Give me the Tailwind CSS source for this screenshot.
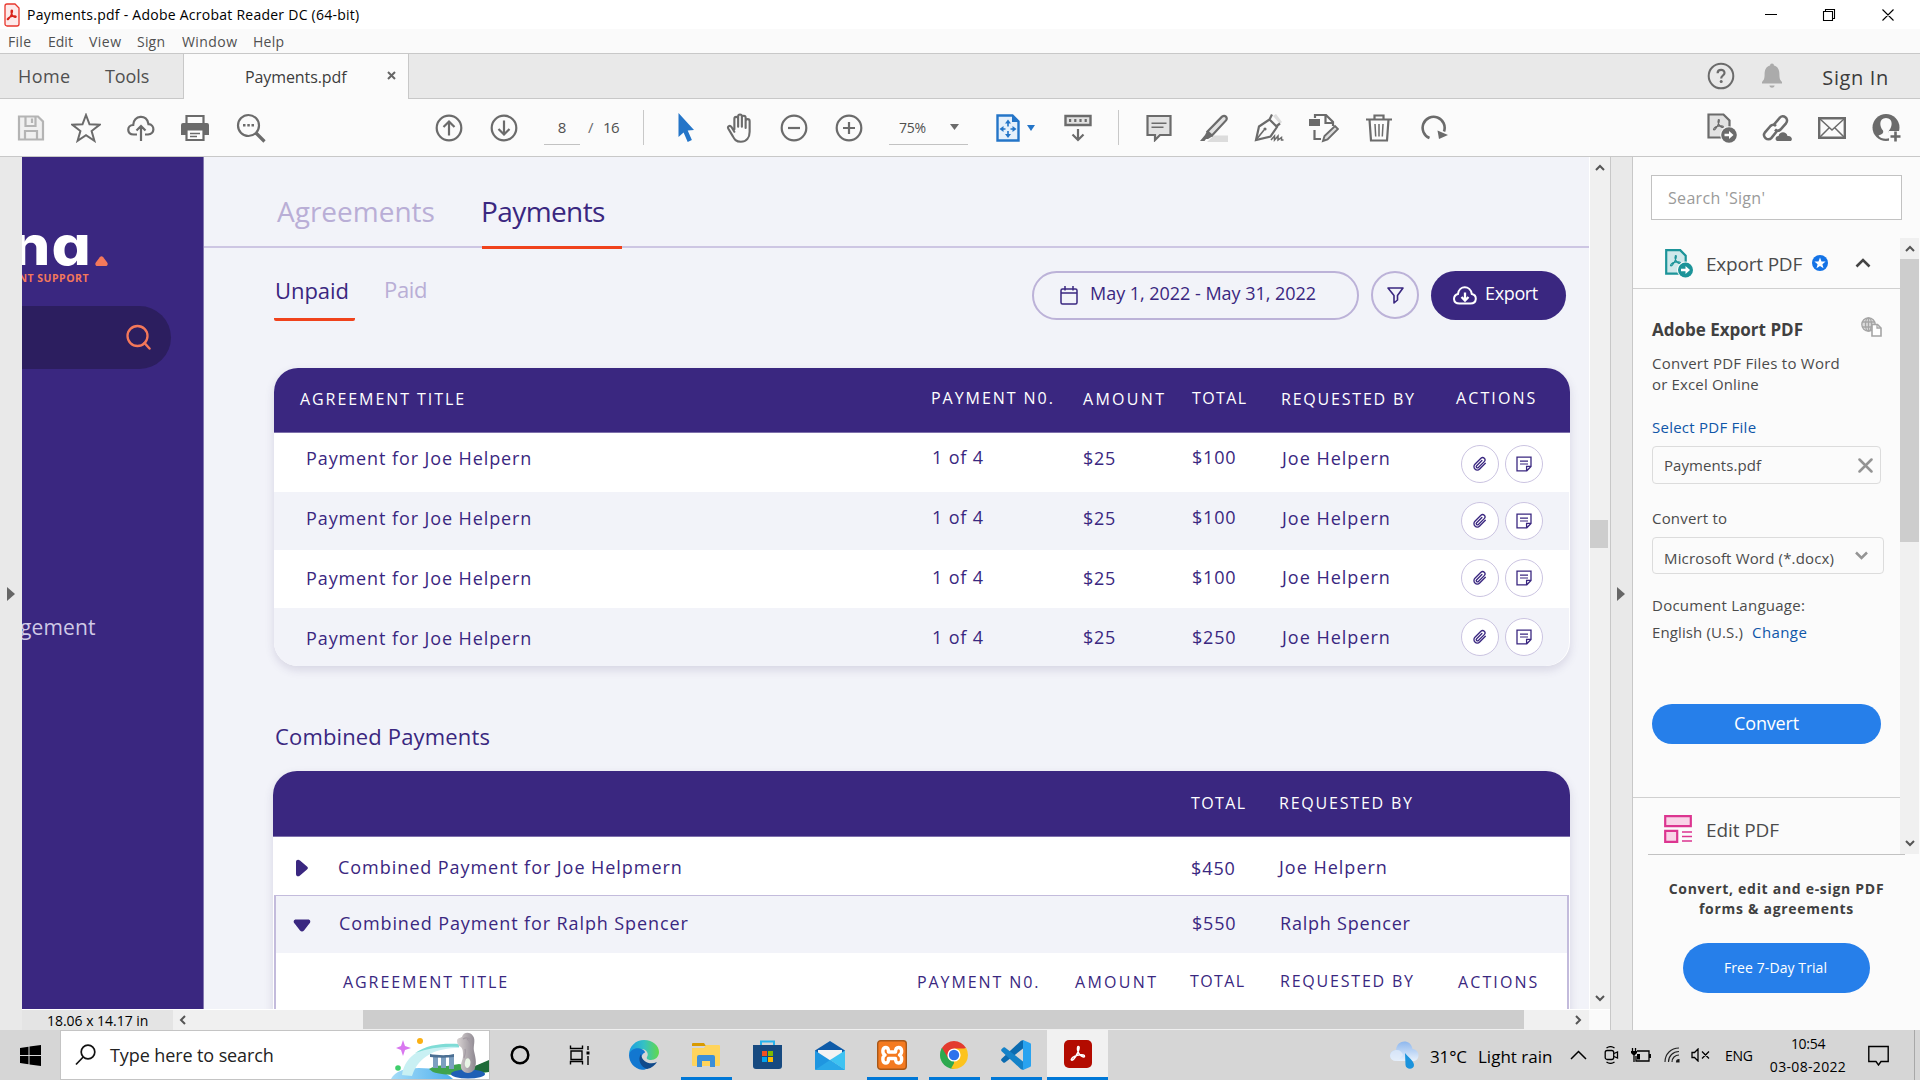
<!DOCTYPE html>
<html lang="en">
<head>
<meta charset="utf-8">
<title>Payments.pdf - Adobe Acrobat Reader DC (64-bit)</title>
<script src="https://cdn.jsdelivr.net/npm/@tailwindcss/browser@4"></script>
</head>
<body class="w-[1920px] h-[1080px] overflow-hidden bg-[#fbfbfb] font-['Open_Sans',sans-serif] text-[#4b4b4b] flex flex-col whitespace-nowrap">

<svg class="hidden">
  <symbol id="clip" viewBox="0 0 24 24"><path d="M20 11 11.500 19.500a5 5 0 0 1-7.100-7.100l9-9a3.500 3.500 0 0 1 5 5l-8.800 8.800a1.800 1.800 0 0 1-2.600-2.600l7.800-7.800" fill="none" stroke="currentColor" stroke-width="2" stroke-linecap="round"/></symbol>
  <symbol id="note" viewBox="0 0 16 16"><path d="M1 1.200h14v9.300l-4.200 4.300H1z M10.600 14.500v-4.200H15" fill="none" stroke="currentColor" stroke-width="1.300"/><path d="M4 5.200h8M4 8h8" stroke="currentColor" stroke-width="1.200"/></symbol>
  <symbol id="acro" viewBox="0 0 24 24"><path d="M4 19.500c1.200-2.800 6.400-5 11-5.300 2.500-.2 5 .3 4.800 1.800-.3 1.500-3.300.5-5.300-1.500-2.400-2.500-3.600-7-3-9.300.3-1.300 1.800-1.200 1.900.2.200 3-3.900 11.300-6.400 13.900C5.600 20.900 3.600 21 4 19.500z" fill="none" stroke="currentColor" stroke-width="1.800" stroke-linejoin="round"/></symbol>
</svg>

<!-- Title bar -->
<header class="h-[29px] shrink-0 bg-white flex items-center pl-1 text-black">
  <svg class="w-[16px] h-[24px] shrink-0" viewBox="0 0 16 24"><path d="M1 3a2 2 0 0 1 2-2h8l4 4v16a2 2 0 0 1-2 2H3a2 2 0 0 1-2-2z" fill="#fdeaea" stroke="#e8362c" stroke-width="1.300"/><path d="M3.500 16c.6-1.600 4-3 7-3 2 0 2 1.300.4 1.200C8.600 14 6.900 10 7.200 8c.2-1.200 1.300-1 1.200.2-.1 2.200-2.600 6.600-4 7.900-.6.6-1.200.4-.9-.1z" fill="none" stroke="#d8241b" stroke-width="1.500"/></svg>
  <span class="ml-[7px] text-[14px] tracking-[0.25px]">Payments.pdf - Adobe Acrobat Reader DC (64-bit)</span>
  <svg class="ml-auto mr-[25px] w-[130px] h-[14px]" viewBox="0 0 130 14" fill="none" stroke="#000" stroke-width="1.100"><path d="M0 6.500h12M58.500 3.500h9v9h-9zM60.500 3.500v-2h9v9h-2M117.500 1.500l11 11M128.500 1.500l-11 11"/></svg>
</header>

<!-- Menu bar -->
<nav class="h-[25px] shrink-0 bg-[#fafafa] border-b border-[#c8c8c8] flex items-center pl-2 text-[14px] text-[#505050]">
  <span class="w-[40px] tracking-[0.28px]">File</span><span class="w-[41px]">Edit</span><span class="w-[48px] tracking-[0.47px]">View</span><span class="w-[45px] tracking-[0.2px]">Sign</span><span class="w-[71px] tracking-[0.42px]">Window</span><span class="tracking-[0.3px]">Help</span>
</nav>

<!-- Tab strip -->
<div class="h-[45px] shrink-0 bg-[#e9e9e9] border-b border-[#c8c8c8] flex">
  <div class="w-[183px] flex items-center pl-[18px] text-[18px] text-[#505050]"><span class="w-[87px] tracking-[0.4px]">Home</span><span class="tracking-[-0.1px]">Tools</span></div>
  <div class="w-[226px] h-[45px] bg-[#fbfbfb] border-x border-[#c8c8c8] flex items-center pl-[61px] text-[16px] text-[#3d3d3d]"><span class="tracking-[-0.1px]">Payments.pdf</span>
    <svg class="ml-[41px] mb-[3px] w-[9px] h-[9px]" viewBox="0 0 9 9"><path d="M1 1l7 7M8 1l-7 7" stroke="#666" stroke-width="2"/></svg></div>
  <div class="ml-auto flex items-center text-[#6b6b6b]">
    <svg class="w-[28px] h-[28px]" viewBox="0 0 28 28"><circle cx="14" cy="14" r="12.300" fill="none" stroke="#6b6b6b" stroke-width="2"/><path d="M10.600 11.200c.1-4.400 7-4.300 6.900-.2-.1 2.600-3.300 2.500-3.300 5.500" fill="none" stroke="#6b6b6b" stroke-width="2.200"/><circle cx="14.200" cy="19.600" r="1.500" fill="#6b6b6b"/></svg>
    <svg class="ml-[26px] w-[22px] h-[26px]" viewBox="0 0 22 26"><path d="M11 .5a2 2 0 0 1 2 2c4 1 5.400 4.500 5.400 8.500 0 5 .8 6 2.600 8v1.500H1V19c1.800-2 2.600-3 2.600-8 0-4 1.400-7.500 5.400-8.500a2 2 0 0 1 2-2zM8.400 22.500h5.200c-.4 3-4.800 3-5.200 0z" fill="#ababab"/></svg>
    <span class="ml-[39px] mr-[31px] pt-[3px] text-[20px] font-medium text-[#3c3c3c] tracking-[0.64px]">Sign In</span>
  </div>
</div>

<!-- Toolbar -->
<div class="h-[58px] shrink-0 bg-[#fbfbfb] border-b border-[#c8c8c8] flex items-center pl-[3px] text-[#6b6b6b] text-[15px]">
  <div class="w-[55px] flex justify-center"><svg class="w-[28px] h-[28px]" viewBox="0 0 28 28" fill="none" stroke="#b4b4b4" stroke-width="2.200"><path d="M2 2.500h19l5 5v18H2z" fill="#f0f0f0"/><path d="M8.500 3v9h10V3M15 4.500v4.500M8 25v-8h12v8"/></svg></div>
  <div class="w-[55px] flex justify-center"><svg class="w-[30px] h-[30px]" viewBox="0 0 30 30"><path d="M15 2l3.500 9.300 10 .5-7.900 6.200 2.800 9.800L15 22.200l-8.400 5.600L9.400 18 1.500 11.800l10-.5z" fill="none" stroke="#6b6b6b" stroke-width="2"/></svg></div>
  <div class="w-[55px] flex justify-center"><svg class="w-[28px] h-[28px]" viewBox="0 0 28 28" fill="none" stroke="#6b6b6b" stroke-width="2.200"><path d="M10 20.500H6.800C-.8 20-.2 11.200 6.200 11 6 1 20.500-.5 21.500 10.200c6.600.4 6.600 10-.5 10.300h-3M14 27V13M9.500 16.500L14 12l4.500 4.500"/></svg></div>
  <div class="w-[55px] flex justify-center"><svg class="-ml-px w-[28px] h-[28px]" viewBox="0 0 28 28"><path d="M5.500 9V2h17v7" fill="none" stroke="#6b6b6b" stroke-width="2.200"/><path d="M2 9h24a2 2 0 0 1 2 2v10h-5v-5H5v5H0V11a2 2 0 0 1 2-2z" fill="#6b6b6b"/><path d="M5.500 15.500h17v10.500h-17z" fill="#fff" stroke="#6b6b6b" stroke-width="2.200"/><path d="M9 19.500h10M9 22.500h7" stroke="#6b6b6b" stroke-width="1.500"/></svg></div>
  <div class="w-[55px] flex justify-center"><svg class="w-[30px] h-[30px]" viewBox="0 0 30 30"><circle cx="12.500" cy="12.500" r="10.500" fill="none" stroke="#6b6b6b" stroke-width="2.200"/><path d="M20 20l8.500 8.500" stroke="#6b6b6b" stroke-width="3.200"/><path d="M7 11h2.500v2.500H7zM11.300 11h2.500v2.500h-2.500zM15.500 11H18v2.500h-2.500z" fill="#6b6b6b"/></svg></div>
  <div class="ml-[143px] w-[55px] flex justify-center"><svg class="w-[28px] h-[28px]" viewBox="0 0 28 28" fill="none" stroke="#6b6b6b" stroke-width="2.200"><circle cx="14" cy="14" r="12.300"/><path d="M14 21.500V8M8.500 13L14 7.500l5.500 5.500"/></svg></div>
  <div class="w-[55px] flex justify-center"><svg class="w-[28px] h-[28px]" viewBox="0 0 28 28" fill="none" stroke="#6b6b6b" stroke-width="2.200"><circle cx="14" cy="14" r="12.300"/><path d="M14 6.500V20M8.500 15l5.500 5.500 5.500-5.500"/></svg></div>
  <div class="ml-[13px] w-[36px] h-[35px] border-b border-[#c2c2c2] flex items-center justify-center text-[#505050]">8</div>
  <span class="ml-[8px] w-[15px]">/</span><span class="w-[40px] text-[#505050] tracking-[-0.5px]">16</span>
  <div class="w-[5px] h-[35px] border-l border-[#c8c8c8]"></div>
  <div class="ml-[10px] w-[55px] flex justify-center"><svg class="w-[18px] h-[30px]" viewBox="0 0 18 30"><path d="M1.500 0l15.500 17-6.300.6 4.200 9.400-4.200 1.900-4.100-9.500L1.500 24z" fill="#2475c8"/></svg></div>
  <div class="w-[53px] flex justify-center"><svg class="w-[30px] h-[30px]" viewBox="0 0 24 24" fill="none" stroke="#6b6b6b" stroke-width="1.700" stroke-linecap="round" stroke-linejoin="round"><path d="M7.500 13V4.600a1.500 1.500 0 0 1 3 0V11M10.500 11V2.700a1.500 1.500 0 0 1 3 0V11M13.500 11V3.700a1.500 1.500 0 0 1 3 0V12M16.500 12V6.500a1.500 1.500 0 0 1 3.200 0V15c0 5-2.700 8-7 8-4 0-5.200-2-6.500-4.500L2.700 12.600c-1-2 1.200-3.200 2.500-1.400L7.500 15"/></svg></div>
  <div class="w-[55px] flex justify-center"><svg class="w-[28px] h-[28px]" viewBox="0 0 28 28" fill="none" stroke="#6b6b6b" stroke-width="2.200"><circle cx="14" cy="14" r="12.300"/><path d="M8 14h12"/></svg></div>
  <div class="w-[55px] flex justify-center"><svg class="w-[28px] h-[28px]" viewBox="0 0 28 28" fill="none" stroke="#6b6b6b" stroke-width="2.200"><circle cx="14" cy="14" r="12.300"/><path d="M8 14h12M14 8v12"/></svg></div>
  <div class="ml-[13px] w-[79px] h-[35px] border-b border-[#c2c2c2] flex items-center pl-[10px] text-[14px] text-[#505050]"><span class="tracking-[-0.29px]">75%</span><svg class="ml-[24px] w-[9px] h-[6px]" viewBox="0 0 9 6"><path d="M0 0h9L4.500 6z" fill="#6b6b6b"/></svg></div>
  <div class="ml-[28px] flex items-center gap-[7px]"><svg class="w-[24px] h-[28px]" viewBox="0 0 24 28"><path d="M1.500 1.500h15l6 6v19h-21z" fill="#e5f0fb" stroke="#2475c8" stroke-width="2.400"/><path d="M16 1v7h7z" fill="#2475c8"/><path d="M12 5.500l3 4H9zM12 24l3-4H9zM3.500 15l4-3v6zM20.500 15l-4-3v6z" fill="#2475c8"/><path d="M12 8v4.500M12 17v4M5.500 15h4M14.500 15h4" stroke="#2475c8" stroke-width="1.600"/></svg>
  <svg class="w-[8px] h-[6px]" viewBox="0 0 8 6"><path d="M0 0h8L4 6z" fill="#2475c8"/></svg></div>
  <div class="ml-[15px] w-[55px] flex justify-center"><svg class="w-[28px] h-[28px]" viewBox="0 0 28 28" fill="none" stroke="#6b6b6b"><path d="M1.500 2h25v9h-25z" fill="#e2e2e2" stroke-width="2.400"/><path d="M5 6.500h18" stroke-width="3" stroke-dasharray="2.200 3"/><path d="M14 15v11M8.500 20.500L14 26l5.500-5.500" stroke-width="2.200"/></svg></div>
  <div class="ml-[13px] w-px h-[35px] bg-[#c8c8c8]"></div>
  <div class="ml-[12px] w-[55px] flex justify-center"><svg class="w-[26px] h-[28px]" viewBox="0 0 26 28"><path d="M1.500 2h23v19H14l-5 5v-5H1.500z" fill="#e2e2e2" stroke="#6b6b6b" stroke-width="2.200"/><path d="M5.500 9.300h15M5.500 13.300h12" stroke="#6b6b6b" stroke-width="1.500"/></svg></div>
  <div class="w-[55px] flex justify-center"><svg class="w-[28px] h-[28px]" viewBox="0 0 28 28"><path d="M14 21.500h14V28H7z" fill="#dcdcdc"/><path d="M7.500 17.500L22 2.700c3-2.300 6 .8 4 3.700L12 21.500z" fill="#e2e2e2" stroke="#6b6b6b" stroke-width="2.200"/><path d="M7 17l6 5-5 3H6l-1.500 2H0l5-6z" fill="#6b6b6b"/></svg></div>
  <div class="w-[55px] flex justify-center"><svg class="w-[30px] h-[30px]" viewBox="0 0 30 30" fill="none" stroke="#6b6b6b" stroke-width="2.200"><path d="M19 3l7 8 2-2-6-8z" fill="#ddd" stroke="none"/><path d="M18 1.500l-2.500 5M26 10.500l-4 3M2 27l3-13.500 10.500-7L23 14l-6.500 9.500z"/><path d="M2 27l8-10" stroke-width="1.600"/><circle cx="11" cy="16" r="1.600" fill="#6b6b6b" stroke="none"/><path d="M17 27l3.500-4v4l3.500-4v4l3.500-2.500V27h2" stroke-width="1.500"/></svg></div>
  <div class="w-[55px] flex justify-center"><svg class="w-[30px] h-[30px]" viewBox="0 0 30 30" fill="none" stroke="#6b6b6b" stroke-width="2.200"><path d="M6 5V2h11l7 7v4M16.500 2v8H24M5.500 17v9H12"/><path d="M0 6h11v7H0z" fill="#6b6b6b" stroke="none"/><path d="M14 28l1.500-5L26 13l3 3-10.500 10.500z" fill="#ddd" stroke-width="1.900"/></svg></div>
  <div class="w-[55px] flex justify-center"><svg class="w-[26px] h-[28px]" viewBox="0 0 26 28" fill="none" stroke="#6b6b6b" stroke-width="2.200"><path d="M0 5.500h26M8.500 5V1.500h9V5M3.500 5.500l1.500 21h16l1.500-21"/><path d="M9 10l.7 12.500M13 10v12.500M17 10l-.7 12.500" stroke-width="1.500"/></svg></div>
  <div class="w-[55px] flex justify-center"><svg class="w-[28px] h-[26px]" viewBox="0 0 28 26"><path d="M9.500 23A11 11 0 1 1 24 16.500" fill="none" stroke="#6b6b6b" stroke-width="2.600"/><path d="M17.500 15.500L28 20l-9 4z" fill="#6b6b6b"/></svg></div>
  <div class="ml-auto w-[55px] flex justify-center"><svg class="w-[30px] h-[30px]" viewBox="0 0 30 30"><path d="M1.500 1.500h15l6 6v17h-21z" fill="#e2e2e2" stroke="#6b6b6b" stroke-width="2.200"/><use href="#acro" x="4" y="4" width="15" height="15"/><circle cx="22" cy="22" r="8.800" fill="#fbfbfb"/><circle cx="22" cy="22" r="7.800" fill="#6b6b6b"/><path d="M17.500 20.700H22V18l4.500 4-4.500 4v-2.700h-4.500z" fill="#fff"/></svg></div>
  <div class="w-[55px] flex justify-center"><svg class="w-[30px] h-[28px]" viewBox="0 0 30 28" fill="none" stroke="#6b6b6b" stroke-width="2.600"><path d="M12 10.500l5.500-6.500c3.500-4.500 10 .8 6.500 5.300l-5.500 6.200c-1.500 1.600-4 1.600-5.500 0"/><path d="M15 17l-5.500 6.800c-3.500 4-10-1-6.500-5.500L8.500 12c1.500-1.600 4-1.600 5.500 0"/><path d="M15 27c-2.500-1.500-1.500-5 1.500-5 1-5 8-5 9 0 4-.5 5.500 3 3.500 5z" fill="#6b6b6b" stroke="none"/></svg></div>
  <div class="w-[55px] flex justify-center"><svg class="w-[28px] h-[22px]" viewBox="0 0 28 22" fill="none" stroke="#6b6b6b"><path d="M1.200 1.200h25.600v19.600H1.200z" stroke-width="2.400"/><path d="M2 2l12 11L26 2M2 20l9-9M26 20l-9-9" stroke-width="1.500"/></svg></div>
  <div class="w-[55px] flex justify-center mr-[6px]"><svg class="w-[30px] h-[28px]" viewBox="0 0 30 28"><circle cx="14" cy="13.500" r="13.500" fill="#6b6b6b"/><path d="M14 4c7.500 0 6.500 9 3 12.500-.8 2.500.5 3.500 4 4.500-2 5-12 5-14.500.5 4-1.500 5.300-2.500 4.500-5C7.500 13 6.500 4 14 4z" fill="#fbfbfb"/><path d="M17 17h13v11H17z" fill="#fbfbfb"/><path d="M18.500 22.500h10M23.500 17.500v10" stroke="#6b6b6b" stroke-width="2.600"/></svg></div>
</div>

<!-- Workspace -->
<main class="h-[873px] shrink-0 flex bg-[#e9e9e9]">
  <div class="w-[22px] flex items-center justify-center"><svg class="ml-[-1px] w-[8px] h-[14px]" viewBox="0 0 8 14"><path d="M0 0l8 7-8 7z" fill="#666"/></svg></div>

  <div class="w-[1588px] flex flex-col">
    <div class="h-[852px] flex">
      <!-- Document page -->
      <div class="w-[1567px] flex bg-[#f2f3f9] text-[#3a2780] overflow-hidden">
        <aside class="w-[182px] h-full shrink-0 bg-[#3a2780] border-r border-[#8378b0] overflow-hidden flex flex-col">
          <div class="h-[112px] shrink-0 pt-[58px] pr-[95px] flex items-start justify-end">
            <div class="h-[54px] flex items-end"><span class="h-[54px] origin-right scale-x-[1.120] font-['Inter',sans-serif] font-extrabold text-[55px] leading-[60px] tracking-[1px] text-white [font-feature-settings:'cv11']">na</span><svg class="ml-[3px] mb-[3px] w-[13px] h-[10px]" viewBox="0 0 13 10"><path d="M4.800 1.200a2.200 2.200 0 0 1 3.400 0l4 5.200c1.100 1.600.3 3.600-1.600 3.600H2.400C.5 10-.3 8 .8 6.400z" fill="#f4785a"/></svg></div>
          </div>
          <div class="mt-[2px] h-[14px] mr-[114px] flex justify-end items-center text-[10.500px] leading-[14px] font-bold tracking-[0.5px] text-[#f4785a]">NT SUPPORT</div>
          <div class="mt-[21px] h-[63px] w-[149px] shrink-0 rounded-r-[32px] bg-[#2c1e5f] flex items-center justify-end pr-[20px]"><svg class="-mt-px w-[25px] h-[26px]" viewBox="0 0 25 26"><circle cx="11.500" cy="12" r="10" fill="none" stroke="#f4785a" stroke-width="2.300"/><path d="M18.500 19l5 5.500" stroke="#f4785a" stroke-width="2.500" stroke-linecap="round"/></svg></div>
          <div class="mt-[242px] h-[32px] leading-[32px] -ml-[2px] text-[21px] tracking-[0.15px] text-[#cfc9e6]">gement</div>
        </aside>
        <section class="grow flex flex-col">
          <div class="h-[91px] shrink-0 border-b-2 border-[#cdc6e3] pl-[73px] flex items-end text-[28px]">
            <span class="w-[205px] h-[57px] leading-[44px] tracking-[0px] text-[#b9aed6]">Agreements</span>
            <span class="w-[140px] h-[60px] leading-[44px] tracking-[-0.6px] -mb-[3px] -indent-px border-b-3 border-[#f0421c]">Payments</span>
          </div>
          <div class="h-[120px] shrink-0 pl-[70px] pr-[23px] pt-[23px] flex items-start">
            <span class="w-[81px] h-[50px] leading-[38px] border-b-3 border-[#f0421c] rounded-[2px] text-[22px] tracking-[-0.05px] pl-px">Unpaid</span>
            <span class="ml-[29px] leading-[37px] text-[22px] tracking-[-0.3px] text-[#b9aed6]">Paid</span>
            <div class="ml-auto w-[327px] h-[49px] rounded-full border-2 border-[#bcb2d8] flex items-center pl-[26px]">
              <svg class="w-[18px] h-[19px]" viewBox="0 0 18 19" fill="none" stroke="#3a2780" stroke-width="1.500"><rect x="1" y="3" width="16" height="15" rx="1.500"/><path d="M1 7h16M5 0v4.500M13 0v4.500"/></svg>
              <span class="ml-[12px] pb-[4px] text-[18px] tracking-[-0.03px]">May 1, 2022 - May 31, 2022</span>
            </div>
            <div class="ml-[12px] w-[48px] h-[48px] rounded-full border-2 border-[#bcb2d8] flex items-center justify-center"><svg class="w-[17px] h-[17px]" viewBox="0 0 17 17"><path d="M1 1h15l-5.500 7.500v4.500L7 16V8.500z" fill="none" stroke="#3a2780" stroke-width="1.600" stroke-linejoin="round"/></svg></div>
            <div class="ml-[12px] w-[135px] h-[49px] rounded-full bg-[#3a2780] flex items-center pl-[22px] text-white">
              <svg class="w-[24px] h-[19px]" viewBox="0 0 24 19" fill="none" stroke="#fff" stroke-width="2"><path d="M6.500 17.500C-.5 17.500-.5 9.500 5 8 6-1 17.500-1 18.800 8c5.500 1 5.500 9.500-1.300 9.500z"/><path d="M12 6.500v7M8.500 11l3.500 3.500 3.500-3.500" stroke-width="2.300"/></svg>
              <span class="ml-[8px] pb-[4px] text-[18px] tracking-[-0.35px]">Export</span>
            </div>
          </div>

          <!-- Unpaid table -->
          <div class="ml-[70px] w-[1296px] h-[298px] shrink-0 rounded-[24px] overflow-hidden bg-white shadow-[0_4px_10px_rgba(60,50,110,0.15)] text-[18px] leading-[24px]">
            <div class="h-[65px] bg-[#3a2780] border-b border-[#7d70ab] text-white text-[16px] grid grid-cols-[657px_152px_109px_89px_174px_1fr] pt-[19px]">
              <span class="pl-[26px] tracking-[1.93px]">AGREEMENT TITLE</span><span class="-mt-px tracking-[1.95px]">PAYMENT N0.</span><span class="tracking-[2.3px]">AMOUNT</span><span class="-mt-px tracking-[1.4px]">TOTAL</span><span class="tracking-[1.79px]">REQUESTED BY</span><span class="-mt-px pl-px tracking-[2.1px]">ACTIONS</span>
            </div>
            <div class="h-[59px] grid grid-cols-[657px_152px_109px_89px_180px_1fr] pt-[13px]">
              <span class="pl-[32px] tracking-[0.9px]">Payment for Joe Helpern</span><span class="-mt-px pl-px tracking-[0.84px]">1 of 4</span><span class="tracking-[0.7px]">$25</span><span class="-mt-px tracking-[0.8px]">$100</span><span class="pl-px tracking-[1px]">Joe Helpern</span>
              <span class="-mt-px flex gap-[6px]"><i class="w-[38px] h-[38px] rounded-full bg-white border-[1.500px] border-[#cbc4e1] flex items-center justify-center"><svg class="w-[16px] h-[16px]"><use href="#clip"/></svg></i><i class="w-[38px] h-[38px] rounded-full bg-white border-[1.500px] border-[#cbc4e1] flex items-center justify-center"><svg class="w-[16px] h-[16px]"><use href="#note"/></svg></i></span>
            </div>
            <div class="h-[58px] mr-px bg-[#f2f3f9] grid grid-cols-[657px_152px_109px_89px_180px_1fr] pt-[14px]">
              <span class="pl-[32px] tracking-[0.9px]">Payment for Joe Helpern</span><span class="-mt-px pl-px tracking-[0.84px]">1 of 4</span><span class="tracking-[0.7px]">$25</span><span class="-mt-px tracking-[0.8px]">$100</span><span class="pl-px tracking-[1px]">Joe Helpern</span>
              <span class="-mt-[4px] flex gap-[6px]"><i class="w-[38px] h-[38px] rounded-full bg-white border-[1.500px] border-[#cbc4e1] flex items-center justify-center"><svg class="w-[16px] h-[16px]"><use href="#clip"/></svg></i><i class="w-[38px] h-[38px] rounded-full bg-white border-[1.500px] border-[#cbc4e1] flex items-center justify-center"><svg class="w-[16px] h-[16px]"><use href="#note"/></svg></i></span>
            </div>
            <div class="h-[58px] grid grid-cols-[657px_152px_109px_89px_180px_1fr] pt-[16px]">
              <span class="pl-[32px] tracking-[0.9px]">Payment for Joe Helpern</span><span class="-mt-px pl-px tracking-[0.84px]">1 of 4</span><span class="tracking-[0.7px]">$25</span><span class="-mt-px tracking-[0.8px]">$100</span><span class="-mt-px pl-px tracking-[1px]">Joe Helpern</span>
              <span class="-mt-[7px] flex gap-[6px]"><i class="w-[38px] h-[38px] rounded-full bg-white border-[1.500px] border-[#cbc4e1] flex items-center justify-center"><svg class="w-[16px] h-[16px]"><use href="#clip"/></svg></i><i class="w-[38px] h-[38px] rounded-full bg-white border-[1.500px] border-[#cbc4e1] flex items-center justify-center"><svg class="w-[16px] h-[16px]"><use href="#note"/></svg></i></span>
            </div>
            <div class="h-[58px] mr-px rounded-br-[24px] bg-[#f2f3f9] grid grid-cols-[657px_152px_109px_89px_180px_1fr] pt-[18px]">
              <span class="pl-[32px] tracking-[0.9px]">Payment for Joe Helpern</span><span class="-mt-px pl-px tracking-[0.84px]">1 of 4</span><span class="-mt-px tracking-[0.7px]">$25</span><span class="-mt-px tracking-[0.8px]">$250</span><span class="-mt-px pl-px tracking-[1px]">Joe Helpern</span>
              <span class="-mt-[8px] flex gap-[6px]"><i class="w-[38px] h-[38px] rounded-full bg-white border-[1.500px] border-[#cbc4e1] flex items-center justify-center"><svg class="w-[16px] h-[16px]"><use href="#clip"/></svg></i><i class="w-[38px] h-[38px] rounded-full bg-white border-[1.500px] border-[#cbc4e1] flex items-center justify-center"><svg class="w-[16px] h-[16px]"><use href="#note"/></svg></i></span>
            </div>
          </div>

          <h2 class="h-[105px] shrink-0 pt-[54px] pl-[71px] text-[22px] leading-[32px] tracking-[0.15px]">Combined Payments</h2>

          <!-- Combined payments table -->
          <div class="ml-[69px] w-[1297px] h-[260px] shrink-0 rounded-t-[24px] overflow-hidden bg-white shadow-[0_4px_10px_rgba(60,50,110,0.15)] text-[18px] leading-[24px]">
            <div class="h-[66px] bg-[#3a2780] border-b border-[#7d70ab] text-white text-[16px] grid grid-cols-[918px_88px_1fr] pt-[20px]">
              <span></span><span class="tracking-[1.4px]">TOTAL</span><span class="tracking-[1.79px]">REQUESTED BY</span>
            </div>
            <div class="h-[58px] grid grid-cols-[65px_853px_88px_1fr] pt-[18px]">
              <span class="pl-[22px] pt-[4px]"><svg class="w-[14px] h-[18px]" viewBox="0 0 14 18"><path d="M1 3c0-2.500 2.500-3 4-1.400l7 5.900c1.200 1 1.200 2 0 3l-7 5.900C3.500 18 1 17.500 1 15z" fill="#3a2780"/></svg></span><span class="tracking-[0.95px]">Combined Payment for Joe Helpmern</span><span class="pt-px tracking-[0.9px]">$450</span><span class="tracking-[1px]">Joe Helpern</span>
            </div>
            <div class="ml-[1px] mr-px h-[136px] border-2 border-t border-b-0 border-[#c3bbdc]">
              <div class="h-[57px] bg-[#f2f3f9] grid grid-cols-[63px_852px_88px_1fr] pt-[15px]">
                <span class="pl-[17px] pt-[8px]"><svg class="w-[18px] h-[13px]" viewBox="0 0 18 13"><path d="M3 .5h12c2.500 0 3 2.500 1.400 4L11 11.500c-1.200 1.300-2.800 1.300-4 0L1.600 4.500C0 3 .5.500 3 .5z" fill="#3a2780"/></svg></span><span class="tracking-[0.89px]">Combined Payment for Ralph Spencer</span><span class="pl-px tracking-[0.8px]">$550</span><span class="pl-px tracking-[0.79px]">Ralph Spencer</span>
              </div>
              <div class="grid grid-cols-[641px_158px_115px_90px_178px_1fr] pt-[17px] text-[16px]">
                <span class="pl-[67px] tracking-[1.93px]">AGREEMENT TITLE</span><span class="tracking-[1.9px]">PAYMENT N0.</span><span class="tracking-[2.3px]">AMOUNT</span><span class="-mt-px tracking-[1.4px]">TOTAL</span><span class="-mt-px tracking-[1.79px]">REQUESTED BY</span><span class="tracking-[2.1px]">ACTIONS</span>
              </div>
            </div>
          </div>
        </section>
      </div>
      <!-- Vertical scrollbar -->
      <div class="w-[21px] bg-[#f0f0f0] border-l border-white flex flex-col items-center">
        <svg class="mt-[7px] w-[10px] h-[7px]" viewBox="0 0 10 7"><path d="M1 6l4-4 4 4" fill="none" stroke="#555" stroke-width="2"/></svg>
        <div class="mt-[349px] w-[18px] h-[28px] bg-[#cdcdcd] self-stretch"></div>
        <svg class="mt-auto mb-[7px] w-[10px] h-[7px]" viewBox="0 0 10 7"><path d="M1 1l4 4 4-4" fill="none" stroke="#555" stroke-width="2"/></svg>
      </div>
    </div>
    <!-- Page size and horizontal scrollbar -->
    <div class="h-[21px] flex bg-[#f0f0f0] border-t border-white">
      <div class="w-[151px] bg-[#e4e4e4] flex items-center pl-[25px] text-[14px] text-black tracking-[-0.03px]">18.06 x 14.17 in</div>
      <div class="w-[190px] flex items-center pl-[6px]"><svg class="w-[7px] h-[10px]" viewBox="0 0 7 10"><path d="M6 1L2 5l4 4" fill="none" stroke="#555" stroke-width="2"/></svg></div>
      <div class="w-[1161px] h-[19px] bg-[#cdcdcd]"></div>
      <div class="w-[65px] flex items-center justify-end pr-[7px]"><svg class="w-[7px] h-[10px]" viewBox="0 0 7 10"><path d="M1 1l4 4-4 4" fill="none" stroke="#555" stroke-width="2"/></svg></div>
      <div class="grow bg-[#fafafa]"></div>
    </div>
  </div>

  <div class="w-[23px] border-x border-[#c8c8c8] flex items-center justify-center"><svg class="-ml-[2px] w-[8px] h-[14px]" viewBox="0 0 8 14"><path d="M0 0l8 7-8 7z" fill="#666"/></svg></div>

  <!-- Tools pane -->
  <div class="w-[287px] bg-[#fbfbfb] flex flex-col text-[15px]">
    <div class="mt-[18px] ml-[18px] w-[251px] h-[45px] shrink-0 bg-white border border-[#c2c2c2] flex items-center pl-[16px] text-[16px] text-[#9a9a9a] tracking-[0.32px]">Search 'Sign'</div>
    <div class="mt-[18px] h-[616px] shrink-0 flex">
      <div class="w-[267px] flex flex-col">
        <div class="h-[51px] shrink-0 border-b border-[#d0d0d0] flex items-center pl-[32px]">
          <svg class="w-[28px] h-[29px]" viewBox="0 0 28 29"><path d="M1.200 1.200h14l5.500 5.500v18H1.200z" fill="#cfe8ea" stroke="#1c9499" stroke-width="2.200"/><g color="#1c9499"><use href="#acro" x="3" y="4" width="15" height="15"/></g><circle cx="20.500" cy="21" r="8.500" fill="#fbfbfb"/><circle cx="20.500" cy="21" r="7.500" fill="#1c9499"/><path d="M16 19.700h4.500V17l4.500 4-4.500 4v-2.700H16z" fill="#fff"/></svg>
          <span class="ml-[13px] pt-[2px] text-[19px] tracking-[-0.2px]">Export PDF</span>
          <svg class="ml-[10px] w-[16px] h-[16px]" viewBox="0 0 16 16"><circle cx="8" cy="8" r="8" fill="#1473e6"/><path d="M8 2.500l1.500 3.900 4.100.2-3.200 2.600 1.100 4L8 10.900l-3.500 2.300 1.100-4-3.200-2.600 4.100-.2z" fill="#fff"/></svg>
          <svg class="ml-[27px] w-[16px] h-[10px]" viewBox="0 0 16 10"><path d="M1.500 8.500L8 2l6.500 6.500" fill="none" stroke="#444" stroke-width="2.600"/></svg>
        </div>
        <div class="pl-[19px] flex flex-col leading-[21px]">
          <div class="mt-[26px] h-[28px] flex items-center text-[17px] font-bold text-[#404040]"><span class="pt-px">Adobe Export PDF</span>
            <svg class="ml-auto mr-[18px] mb-[5px] w-[21px] h-[20px]" viewBox="0 0 21 20" fill="none" stroke="#a5a5a5" stroke-width="1.300"><circle cx="7.500" cy="7.500" r="6.700" fill="#dcdcdc"/><ellipse cx="7.500" cy="7.500" rx="3" ry="6.700"/><path d="M1 5h13M1 10h13M7.500 1v13"/><path d="M11 7.500h5.500l3.500 3.500v8h-9z" fill="#fff" stroke-width="1.600"/><path d="M16 7.500V11h4"/></svg></div>
          <p class="mt-[10px] tracking-[0.25px]">Convert PDF Files to Word</p>
          <p class="tracking-[0.15px]">or Excel Online</p>
          <a class="mt-[22px] text-[#0f56a8] tracking-[0.25px]">Select PDF File</a>
          <div class="mt-[8px] w-[229px] h-[38px] rounded-[4px] border border-[#dcdcdc] flex items-center pl-[11px] pr-[7px] pt-px"><span class="tracking-[0.07px]">Payments.pdf</span><svg class="ml-auto w-[15px] h-[15px]" viewBox="0 0 15 15"><path d="M1.500 1.500l12 12M13.500 1.500l-12 12" stroke="#949494" stroke-width="2.500" stroke-linecap="round"/></svg></div>
          <p class="mt-[24px] tracking-[0.19px]">Convert to</p>
          <div class="mt-[8px] w-[232px] h-[37px] rounded-[4px] border border-[#dcdcdc] flex items-center pl-[11px] pr-[15px]"><span class="pt-[5px] tracking-[0.16px]">Microsoft Word (*.docx)</span><svg class="ml-auto w-[13px] h-[9px]" viewBox="0 0 13 9"><path d="M1 1.500L6.500 7 12 1.500" fill="none" stroke="#949494" stroke-width="2.500"/></svg></div>
          <p class="mt-[21px] tracking-[0.25px]">Document Language:</p>
          <p class="mt-[6px] flex gap-[9px]"><span class="tracking-[0.12px]">English (U.S.)</span><a class="text-[#0f56a8] tracking-[0.4px]">Change</a></p>
          <div class="mt-[61px] w-[229px] h-[40px] rounded-full bg-[#267fea] flex items-center justify-center pb-[2px] text-[18px] text-white tracking-[-0.18px]">Convert</div>
        </div>
        <div class="mt-[53px] border-t border-[#d0d0d0] pt-[17px] pl-[31px] flex items-start">
          <svg class="w-[28px] h-[28px]" viewBox="0 0 28 28" fill="#f9d3e7" stroke="#dc3590" stroke-width="2.200"><path d="M1.200 1.200h25.600v10H1.200zM1.200 15.800h12v11h-12z"/><path d="M18 17h10M18 21.500h10M18 26h10" stroke-width="1.600"/></svg>
          <span class="ml-[14px] text-[19px] leading-[31px] tracking-[-0.1px]">Edit PDF</span>
        </div>
      </div>
      <div class="w-[19px] bg-[#f0f0f0] flex flex-col items-center"><svg class="mt-[7px] w-[10px] h-[7px]" viewBox="0 0 10 7"><path d="M1 6l4-4 4 4" fill="none" stroke="#555" stroke-width="2"/></svg><div class="mt-[7px] w-[19px] h-[283px] bg-[#cdcdcd]"></div><svg class="mt-auto mb-[7px] w-[10px] h-[7px]" viewBox="0 0 10 7"><path d="M1 1l4 4 4-4" fill="none" stroke="#555" stroke-width="2"/></svg></div>
    </div>
    <div class="ml-[15px] w-[257px] border-t border-[#c2c2c2] pt-[24px] flex flex-col items-center text-[14px]">
      <p class="text-center font-bold leading-[20px] text-[#404040] tracking-[0.7px]">Convert, edit and e-sign PDF<br>forms &amp; agreements</p>
      <div class="mt-[24px] w-[187px] h-[50px] rounded-full bg-[#267fea] text-white flex items-center justify-center pr-[2px] pb-[2px] tracking-[0.09px]">Free 7-Day Trial</div>
    </div>
  </div>
</main>

<!-- Taskbar -->
<footer class="h-[50px] shrink-0 bg-[#d6d6d6] flex items-center text-black">
  <div class="w-[60px] flex justify-center"><svg class="w-[21px] h-[21px]" viewBox="0 0 21 21"><path d="M0 3l8.500-1.200V10H0zM9.500 1.600L21 0v10H9.500zM0 11h8.500v8.200L0 18zM9.500 11H21v10L9.500 19.400z"/></svg></div>
  <div class="w-[430px] h-[50px] bg-white border border-[#c4c4c4] flex items-center pl-[14px]">
    <svg class="w-[21px] h-[22px]" viewBox="0 0 21 22" fill="none" stroke="#111" stroke-width="1.700"><circle cx="13" cy="8" r="6.800"/><path d="M8.200 13L1 20.500"/></svg>
    <span class="ml-[14px] text-[18px] text-[#222] tracking-[-0.1px]">Type here to search</span>
    <svg class="ml-auto w-[98px] h-[48px]" viewBox="0 0 98 48">
      <defs><linearGradient id="water" x1="0" x2="1"><stop offset="0" stop-color="#a5dcf8"/><stop offset="1" stop-color="#4fb0ee"/></linearGradient><linearGradient id="stone" x1="0" x2="1"><stop offset="0" stop-color="#d9d3d3"/><stop offset="1" stop-color="#8d8790"/></linearGradient></defs>
      <path d="M0 48c4-8 14-11 28-11s26 3 34 11z" fill="url(#water)"/>
      <path d="M11 44C14 22 36 12 68 14v3C46 17 28 24 21 45z" fill="#c9f0f3"/><path d="M24 22C36 14 50 12 68 13v3C52 15 38 17 24 22z" fill="#7fdcd6"/>
      <path d="M38 38c6-4 12-4 18-3l12-2 14 3 16-6v11c-20 4-45 4-56 0z" fill="#3fa34d"/><path d="M84 35l14-6v12H84z" fill="#1f6b39"/>
      <path d="M42 25h5v12h-5zM50 26h5v11h-5zM58 25h5v13h-5z" fill="#7d9fc0"/><path d="M39 23c6 1 16 2 24 0v3c-8 1-16 1-24 0z" fill="#4b6f93"/>
      <ellipse cx="77" cy="43" rx="17" ry="4.500" fill="#1f5fb5"/>
      <path d="M66 10c0-3 3-3 5-4 1-5 8-6 11-1 3 4 0 10 1 15 2 8 3 14 0 19-3 4-9 4-12 0-3-5 1-9 1-14 0-4 0-7-2-9-3-1-4-4-4-6z" fill="url(#stone)"/><path d="M75 28c4-3 6 4 3 8-3 3-6-2-3-8z" fill="#e9f5e6"/><path d="M76 8c3 2 5 6 4 12M72 8c3-2 6-1 8 1M74 18c1 3 0 6-1 9" fill="none" stroke="#a39ba3" stroke-width="1.200"/>
      <path d="M12 9l2 6 6 2-6 2-2 6-2-6-5-2 5-2z" fill="#d977f0"/><circle cx="29" cy="10" r="3" fill="#fbb013"/><circle cx="7" cy="37" r="2.800" fill="#3fce6c"/>
    </svg>
  </div>
  <div class="w-[60px] flex justify-center"><svg class="w-[20px] h-[20px]" viewBox="0 0 20 20"><circle cx="10" cy="10" r="8.300" fill="none" stroke="#000" stroke-width="2.500"/></svg></div>
  <div class="w-[60px] flex justify-center"><svg class="w-[22px] h-[20px]" viewBox="0 0 22 20" fill="none" stroke="#000" stroke-width="1.400"><path d="M2 6h11v8.500H2zM1.500.5v3h12v-3M1.500 19.500v-3h12v3M19 1v4M19 11v9"/><path d="M17.500 6.500h3v3h-3z" fill="#000" stroke="none"/></svg></div>
  <div class="ml-[3px] w-[62px] h-full flex items-center justify-center"><svg class="w-[30px] h-[30px]" viewBox="0 0 30 30"><defs><linearGradient id="edgeTop" x1="0" x2="1"><stop offset="0" stop-color="#1b9de2"/><stop offset=".5" stop-color="#35c1c4"/><stop offset="1" stop-color="#62d94a"/></linearGradient></defs><path d="M0 15C0 6 7 0 15 0c9 0 15 6 15 12 0 5-4 8-8 8-3 0-5-1-4-3 2-3 0-8-6-8C5 9 1 12 0 15z" fill="url(#edgeTop)"/><path d="M0 15c1-5 6-7.500 11-6.500 3 .6 5 2.500 5 4-5 2-6 11 3 15.500-2 1.500-4 2-6 1.700C5 29 0 22 0 15z" fill="#1277d0"/><path d="M12 14c-4 6 0 13 6 15 5-1 8-4 10-7-6 3-15 1-16-8z" fill="#114a8b"/></svg></div>
  <div class="w-[62px] h-full flex flex-col items-center"><svg class="mt-[13px] w-[28px] h-[24px]" viewBox="0 0 28 24"><path d="M0 1a1 1 0 0 1 1-1h11l2 3H0z" fill="#d99a00"/><path d="M0 5h12l2-3h13a1 1 0 0 1 1 1v19a1 1 0 0 1-1 1H1a1 1 0 0 1-1-1z" fill="#ffd45c"/><path d="M5 24V14a2 2 0 0 1 2-2h14a2 2 0 0 1 2 2v10h-5v-6h-8v6z" fill="#3c8fd9"/></svg><div class="mt-auto w-[51px] h-[3px] bg-[#0078d7]"></div></div>
  <div class="w-[62px] flex justify-center"><svg class="-ml-px w-[29px] h-[30px]" viewBox="0 0 29 30"><path d="M8 7V1.500h13V7" fill="none" stroke="#27b4ee" stroke-width="2"/><path d="M0 5h29v21a3 3 0 0 1-3 3H3a3 3 0 0 1-3-3z" fill="#174a80"/><path d="M9 11h5v5H9z" fill="#f25022"/><path d="M15 11h5v5h-5z" fill="#7fba00"/><path d="M9 17h5v5H9z" fill="#00a4ef"/><path d="M15 17h5v5h-5z" fill="#ffb900"/></svg></div>
  <div class="w-[62px] flex justify-center"><svg class="w-[30px] h-[29px]" viewBox="0 0 30 29"><path d="M0 9.500L15 0l15 9.500V14H0z" fill="#0f5ba8"/><path d="M3 9h24v10H3z" fill="#f3f3f3"/><path d="M0 9.500L30 29H1a1 1 0 0 1-1-1z" fill="#1f96e0"/><path d="M30 9.500L15 19l15 10z" fill="#3fc3f2"/><path d="M0 29l15-10 15 10z" fill="#2aa8e8"/></svg></div>
  <div class="w-[62px] h-full flex flex-col items-center"><svg class="mt-[10px] w-[30px] h-[30px]" viewBox="0 0 30 30"><rect x=".7" y=".7" width="28.600" height="28.600" rx="3" fill="#f47a20" stroke="#a85718" stroke-width="1.400"/><path d="M9 7.500c-4 0-4 6-1 7.500-3 1.500-3 8 1 8 2.500 0 2.500-3 2.500-4.500h7c0 2 .5 4.500 3 4.500 4 0 4-6.500 1-8 3-1.500 3-7.500-1-7.500-2.500 0-3 2.500-3 4.500h-7c0-2 0-4.500-2.500-4.500z" fill="none" stroke="#fff" stroke-width="3.400" stroke-linejoin="round"/></svg><div class="mt-auto w-[51px] h-[3px] bg-[#0078d7]"></div></div>
  <div class="w-[62px] h-full flex flex-col items-center"><svg class="mt-[11px] w-[28px] h-[28px]" viewBox="0 0 28 28"><path d="M14 14L1.900 7A14 14 0 0 1 26.100 7z" fill="#e33b2e"/><path d="M14 14l12.100-7A14 14 0 0 1 14 28z" fill="#fcc31e"/><path d="M14 14v14A14 14 0 0 1 1.900 7z" fill="#2da94f"/><path d="M14 7.500h12.500L20 17z" fill="#fcc31e"/><path d="M1.900 7h12v7l-6 3z" fill="#e33b2e"/><path d="M1.900 7L8.400 18l-2 7A14 14 0 0 1 1.900 7z" fill="#2da94f"/><path d="M19.500 17.200L14 28l-3-.4 4-7z" fill="#fcc31e"/><circle cx="14" cy="14" r="6.600" fill="#fff"/><circle cx="14" cy="14" r="5.200" fill="#2d72ec"/></svg><div class="mt-auto w-[51px] h-[3px] bg-[#0078d7]"></div></div>
  <div class="w-[62px] h-full flex flex-col items-center"><svg class="mt-[10px] w-[30px] h-[30px]" viewBox="0 0 30 30"><path d="M22 8.500L4 22.500c-.8.600-1.500.3-2-.2L.5 20.800c-.6-.6-.5-1.400.1-2L20 .8 22.500 0z" fill="#0b6bb0"/><path d="M22 21.500L4 7.500c-.8-.6-1.500-.3-2 .2L.5 9.200c-.6.6-.5 1.400.1 2L20 29.200l2.500.8z" fill="#1482c8"/><path d="M22 0l7 3a1.500 1.500 0 0 1 1 1.400v21.200a1.500 1.500 0 0 1-1 1.400l-7 3z" fill="#29a3f0"/></svg><div class="mt-auto w-[51px] h-[3px] bg-[#0078d7]"></div></div>
  <div class="w-[61px] h-full bg-[#f1f1f1] flex flex-col items-center"><svg class="mt-[10px] w-[28px] h-[28px] text-white" viewBox="0 0 28 28"><rect width="28" height="28" rx="5" fill="#b30b00"/><use href="#acro" x="4" y="3" width="20" height="20"/></svg><div class="mt-auto w-[61px] h-[3px] bg-[#0078d7]"></div></div>

  <svg class="ml-auto w-[29px] h-[28px]" viewBox="0 0 29 28"><defs><linearGradient id="cloud" x1="0" y1="0" x2="0" y2="1"><stop offset="0" stop-color="#8fb8ee"/><stop offset="1" stop-color="#e8f1fc"/></linearGradient></defs><path d="M6 9C7-2 21-2 22.500 8c8 1 8 12 0 12H6C-2 19.500-2 9.500 6 9z" fill="url(#cloud)"/><path d="M7 20c-9 0-9-11 0-11 3 0 5 2 6 5z" fill="#e3edf9" opacity=".7"/><path d="M15 12c3 4 9 8 9 12 0 5-8 5-8.500 0z" fill="#1b93dc"/></svg>
  <span class="ml-[11px] pt-[3px] w-[48px] text-[17px] tracking-[-0.14px]">31°C</span>
  <span class="pt-[3px] w-[92px] text-[17px] tracking-[0px]">Light rain</span>
  <svg class="w-[17px] h-[10px]" viewBox="0 0 17 10" fill="none" stroke="#000" stroke-width="1.500"><path d="M1 9l7.500-7.500L16 9"/></svg>
  <svg class="ml-[17px] w-[15px] h-[18px]" viewBox="0 0 15 18" fill="none" stroke="#000" stroke-width="1.300"><rect x="1.200" y="4.500" width="8.500" height="9" rx="2"/><path d="M10 7.500l3.500-1.500v6L10 10.500M2.500 2C5 .3 8 .3 10.500 2M2.500 16c2.500 1.700 5.500 1.700 8 0"/></svg>
  <svg class="ml-[12px] w-[20px] h-[15px]" viewBox="0 0 20 15" fill="none" stroke="#000" stroke-width="1.300"><path d="M6 3h12v10H5V8M19.300 6v4M1.500 0v3M4.500 0v3M3 6v8"/><path d="M0 3h6v2L4 7H2L0 5zM6 6h3v5.500H6z" fill="#000" stroke="none"/></svg>
  <svg class="ml-[13px] w-[16px] h-[16px]" viewBox="0 0 16 16" fill="none" stroke="#222" stroke-width="1.100"><path d="M1 15C1 7 7 1 15 1M4.500 15C4.500 9 9 4.500 15 4.500M8 15c0-4 3-7 7-7"/><path d="M12.500 15c0-1.500 1-2.500 2.500-2.500V15z" fill="#000"/></svg>
  <svg class="ml-[11px] w-[20px] h-[14px]" viewBox="0 0 20 14" fill="none" stroke="#000" stroke-width="1.300"><path d="M1 4.500h2.500L7 1v12L3.500 9.500H1zM11 3.500l7 7M18 3.500l-7 7"/></svg>
  <span class="ml-[14px] w-[28px] pt-px text-[14px] tracking-[-0.25px]">ENG</span>
  <div class="ml-[15px] w-[80px] flex flex-col items-center text-[14px] leading-[23px]"><span class="tracking-[-0.3px]">10:54</span><span class="tracking-[0.33px]">03-08-2022</span></div>
  <svg class="ml-[20px] w-[21px] h-[21px]" viewBox="0 0 21 21" fill="none" stroke="#000" stroke-width="1.400"><path d="M.8 1.500h19.400v15H13L10.500 20 8 16.500H.8z"/></svg>
  <div class="ml-[25px] mr-[5px] w-px h-full bg-[#a8a8a8]"></div>
</footer>
</body>
</html>
